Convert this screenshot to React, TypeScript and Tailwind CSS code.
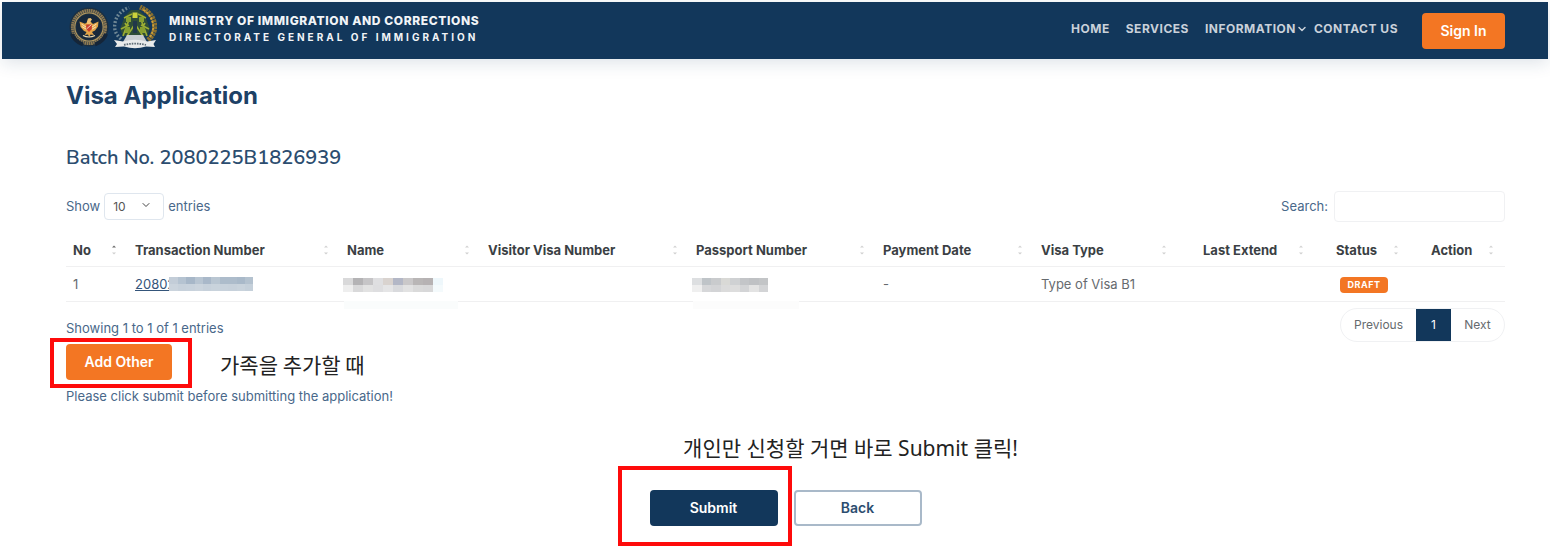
import { ChevronDown } from "lucide-react"

const columns = [
  { label: 'No', className: 'w-[62px] pr-2.5' },
  { label: 'Transaction Number', className: 'w-[212px] pr-2.5' },
  { label: 'Name', className: 'w-[141px] pr-2.5' },
  { label: 'Visitor Visa Number', className: 'w-[208px] pr-2.5' },
  { label: 'Passport Number', className: 'w-[187px] pr-2.5' },
  { label: 'Payment Date', className: 'w-[158px] pr-2.5' },
  { label: 'Visa Type', className: 'w-[162px] pr-7' },
  { label: 'Last Extend', className: 'w-[133px] pr-6' },
  { label: 'Status', className: 'w-[95px] pr-6' },
  { label: 'Action', className: 'w-[81px] pr-2.5' },
]

const transactionMask = [
  ['#c3cdd8', '#b5c3d1', '#a7b7c8', '#b8c5d2', '#a9b8c9', '#b9c6d2', '#adbccb', '#adbccb', '#a9b9c9', '#b4c2cf'],
  ['#cbd4dd', '#c7d1db', '#c8d2dc', '#cbd4dd', '#c7d1db', '#c9d3dc', '#c8d2dc', '#c7d1db', '#c9d3dc', '#c5d0da'],
]
const nameMask = [
  ['#d9d9da', '#b4b3b5', '#c6c5c7', '#dfdfe1', '#d9d3cf', '#b3b7c6', '#cac8c9', '#b9b6b6', '#b6b2b3', '#eef7fb'],
  ['#eeeeee', '#d9d9da', '#e2e2e2', '#dedee0', '#e5e5e6', '#d9dadd', '#e2e2e2', '#dadada', '#d8d8d9', '#f4fafc'],
]
const passportMask = [
  ['#dddfe1', '#bfc4c8', '#c9cbcd', '#d9d9d6', '#cfd1d3', '#c3c5c8', '#bfc1c4', '#c3c5c7'],
  ['#efefef', '#d6d7d9', '#d3d4d6', '#dbdbdb', '#dddddd', '#d3d4d6', '#e3e3e3', '#d3d4d6'],
]

function Mosaic({ rows, className }: { rows: string[][]; className: string }) {
  return (
    <span className={`relative inline-flex flex-col align-middle ${className}`} aria-hidden="true">
      {rows.map((row, i) => (
        <span key={i} className="flex h-[7px]">
          {row.map((color, j) => (
            <span key={j} className="flex-1" style={{ backgroundColor: color }} />
          ))}
        </span>
      ))}
    </span>
  )
}

function SortIcon({ active }: { active?: boolean }) {
  return (
    <svg className="h-3 w-2 shrink-0" viewBox="0 0 8 12" aria-hidden="true">
      <path d="M2 3.6 4 1.6 6 3.6Z" fill={active ? '#6b6b6b' : '#d2d2d2'} />
      <path d="M2 8.6 4 10.6 6 8.6Z" fill="#cfcfcf" />
    </svg>
  )
}

function MinistryLogo() {
  return (
    <svg className="h-10 w-10" viewBox="0 0 40 40" aria-hidden="true">
      <circle cx="20" cy="20" r="19.5" fill="#1c2f40" />
      <circle cx="20" cy="20" r="16.5" fill="none" stroke="#8f7a52" strokeWidth="3.2" strokeDasharray="1.7 0.5" />
      <circle cx="20" cy="20" r="14.2" fill="none" stroke="#b0965f" strokeWidth="1.2" />
      <circle cx="20" cy="20" r="12.6" fill="#17283b" />
      <path d="M3 27q2 7 11 10.5M37 27q-2 7-11 10.5" stroke="#152538" strokeWidth="4" fill="none" />
      <path
        d="M19 14.5 16 16.8 10.5 14.5 11.5 20 15 24 17.5 25 15.8 28 19 27.5 20.2 30 21.5 27.5 25 28 23 25 26 23.5 29 19.5 29.5 14.5 24 17 21.5 14.5Z"
        fill="#e2a447"
      />
      <path d="M18 14.5 19 11.5 21.5 11 23 12.5 21.5 14.5 21.5 17H18Z" fill="#f0c274" />
      <path d="M12.5 17 17 20M12.8 19.5 17 22M27.5 17 23 20M27 19.8 23 22.2" stroke="#fff0cf" strokeWidth="0.8" />
      <path d="M17.2 17.5H22.8V22L20 25 17.2 22Z" fill="#c8402f" />
      <path d="M17.5 22 22.5 17.5" stroke="#f5dfcc" strokeWidth="0.9" />
      <path d="M14 28.5q6 3 12 0" stroke="#ecd9ac" strokeWidth="1.2" fill="none" />
    </svg>
  )
}

function ImmigrationLogo() {
  return (
    <svg className="h-11 w-11" viewBox="0 0 44 44" aria-hidden="true">
      <path d="M8 34Q0 27 2 18 4 7 16 2.5" fill="none" stroke="#6f8794" strokeWidth="3.4" strokeDasharray="1.8 1.8" />
      <path d="M35 35Q43 28 41.5 19 40 8 27 2" fill="none" stroke="#8a7030" strokeWidth="5" strokeDasharray="2.6 0.7" />
      <path d="M37 32Q41 26 40 19 38 9 29 4" fill="none" stroke="#cf9f38" strokeWidth="1.8" strokeDasharray="2.4 1.2" />
      <path d="M18 5H26L32 11 37 24 34 31H10L7 24 12 11Z" fill="#2f4d38" />
      <path d="M11 13 19 9M33 13 25 9M8 24 16 20M36 24 28 20M10 31 17 12M34 31 27 12M14 31 22 19 30 31M12 18 17 27M32 18 27 27" stroke="#9cae33" strokeWidth="1.6" fill="none" />
      <path d="M13 12h5v5h-5zM26 12h5v5h-5zM12 22h5v6h-5zM27 22h5v6h-5z" fill="#879f31" />
      <path d="M19.5 7.5h5v5.5h-5z" fill="#ccd23b" />
      <path d="M20 16h4v12h-4z" fill="#22384a" />
      <path d="M14 30H30L34 37H10Z" fill="#c9cdd1" />
      <path d="M1 35 10 36.5Q22 33 34 36.5L43 35 40.5 39 42 42 33 41.5Q22 45 11 41.5L2 42 4 39Z" fill="#e8eaeb" />
      <path d="M11 39.8Q22 37.5 33 39.8" fill="none" stroke="#5f6c76" strokeWidth="1.8" strokeDasharray="1.6 1" />
    </svg>
  )
}

function SiteHeader() {
  return (
    <header className="flex h-[57px] items-center justify-between bg-[#12375b] pr-[43px] pl-[67px] shadow-[0_4px_16px_rgba(18,55,91,0.14)]">
      <a href="#" className="-mt-2 flex items-center gap-1">
        <MinistryLogo />
        <ImmigrationLogo />
        <span className="mt-1 ml-2 flex flex-col text-[#f1f4f7]">
          <span className="text-[12px] leading-4 font-extrabold tracking-[0.6px]">MINISTRY OF IMMIGRATION AND CORRECTIONS</span>
          <span className="text-[10px] leading-4 font-bold tracking-[3px]">DIRECTORATE GENERAL OF IMMIGRATION</span>
        </span>
      </a>
      <div className="flex items-center gap-6">
        <nav className="pb-1 text-[12px] font-bold tracking-[0.5px] text-[#c9d1da]">
          <ul className="flex items-center">
            <li className="mr-4"><a href="#">HOME</a></li>
            <li className="mr-4"><a href="#">SERVICES</a></li>
            <li className="mr-1.5">
              <a href="#" className="flex items-center">
                INFORMATION
                <ChevronDown className="size-3" strokeWidth={3} />
              </a>
            </li>
            <li><a href="#">CONTACT US</a></li>
          </ul>
        </nav>
        <button type="button" className="h-9 w-[83px] rounded bg-[#f37623] text-[14px] font-semibold text-white">
          Sign In
        </button>
      </div>
    </header>
  )
}

function VisaTable() {
  return (
    <table className="mt-3 w-full table-fixed text-left text-[13px] leading-4">
      <thead>
        <tr className="border-b border-[#f0f0f1] text-[#3b3f44]">
          {columns.map((col, i) => (
            <th key={col.label} scope="col" className={`${col.className} h-8 pl-[7px] font-bold whitespace-nowrap`}>
              <span className="flex items-center justify-between">
                {col.label}
                <SortIcon active={i === 0} />
              </span>
            </th>
          ))}
        </tr>
      </thead>
      <tbody>
        <tr className="h-[35px] border-b border-[#f0f0f1] whitespace-nowrap text-[#666a6e] [&>td]:pl-[7px]">
          <td>1</td>
          <td>
            <a href="#" className="flex items-center text-[#34557a]">
              <span className="underline">20802</span>
              <Mosaic rows={transactionMask} className="-ml-1.5 w-[84px]" />
            </a>
          </td>
          <td className="relative">
            <Mosaic rows={nameMask} className="-ml-1 w-[100px]" />
            <span className="absolute top-full left-1 h-2 w-[114px] bg-[#fafcfc]" />
          </td>
          <td></td>
          <td className="relative">
            <Mosaic rows={passportMask} className="-ml-1 w-[76px]" />
            <span className="absolute top-full left-1 h-2 w-[106px] bg-[#fcfcfc]" />
          </td>
          <td>-</td>
          <td>Type of Visa B1</td>
          <td></td>
          <td>
            <span className="ml-1 inline-flex h-4 w-12 items-center justify-center rounded bg-[#f37623] text-[9px] font-bold tracking-[0.5px] text-white">DRAFT</span>
          </td>
          <td></td>
        </tr>
      </tbody>
    </table>
  )
}

export default function App() {
  return (
    <div className="bg-white p-0.5 font-[Inter,'Noto_Sans_CJK_KR',sans-serif] text-[#12375b]">
      <SiteHeader />
      <main className="pr-[43px] pb-8 pl-16">
        <h1 className="mt-[21px] text-[24px] leading-8 font-bold text-[#1d4166]">Visa Application</h1>
        <h2 className="mt-8 font-[Nunito,'Noto_Sans',sans-serif] text-[20px] leading-7 font-semibold text-[#2c4d6f]">Batch No. 2080225B1826939</h2>

        <div className="mt-[19px] flex items-center justify-between text-[13px] text-[#49688a]">
          <div className="flex items-center gap-1">
            <label htmlFor="length">Show</label>
            <span className="relative">
              <select id="length" className="h-[27px] w-[60px] appearance-none rounded border border-[#dfe6ee] bg-white pl-2 text-[12px] text-[#555]">
                <option>10</option>
              </select>
              <ChevronDown className="pointer-events-none absolute top-1.5 right-3 size-3 text-[#444]" />
            </span>
            <span>entries</span>
          </div>
          <div className="flex items-center gap-1.5">
            <label htmlFor="search">Search:</label>
            <input id="search" type="search" className="h-[31px] w-[171px] rounded border border-[#f0f1f3] px-2" />
          </div>
        </div>

        <VisaTable />

        <div className="mt-1.5 flex items-start justify-between">
          <p className="mt-3 text-[13px] leading-4 text-[#49688a]">Showing 1 to 1 of 1 entries</p>
          <nav aria-label="Pages" className="-mb-2 flex h-[34px] overflow-hidden rounded-full border border-[#f0f1f3] text-[12px] text-[#666a6e]">
            <button type="button" className="w-[75px]">Previous</button>
            <button type="button" className="w-[35px] bg-[#12375b] text-white">1</button>
            <button type="button" className="w-[53px]">Next</button>
          </nav>
        </div>

        <div className="mt-2 flex items-center gap-12">
          <div className="relative">
            <button type="button" className="h-9 w-[106px] rounded bg-[#f37623] text-[14px] font-semibold text-white">
              Add Other
            </button>
            <span className="pointer-events-none absolute -top-1.5 -right-5 -bottom-2 -left-4 border-4 border-[#fe0b0b]" />
          </div>
          <p className="mt-1 font-['Noto_Sans_CJK_KR',sans-serif] text-[21px] leading-6 text-[#222]">가족을 추가할 때</p>
        </div>
        <p className="mt-2 text-[13px] leading-4 text-[#49688a]">Please click submit before submitting the application!</p>

        <div className="mt-8 flex flex-col items-center">
          <p className="ml-[130px] font-['Noto_Sans','Noto_Sans_CJK_KR',sans-serif] text-[21px] leading-6 text-[#222]">
            개인만 신청할 거면 바로 Submit 클릭!
          </p>
          <div className="mt-[30px] flex gap-4">
            <div className="relative">
              <button type="button" className="h-9 w-32 rounded bg-[#12375b] text-[14px] font-semibold text-white">Submit</button>
              <span className="pointer-events-none absolute -top-6 -right-3.5 -bottom-5 -left-8 border-4 border-[#fe0b0b]" />
            </div>
            <button type="button" className="h-9 w-32 rounded border-2 border-[#a9b9c9] text-[14px] font-semibold text-[#2c4d6f]">Back</button>
          </div>
        </div>
      </main>
    </div>
  )
}
